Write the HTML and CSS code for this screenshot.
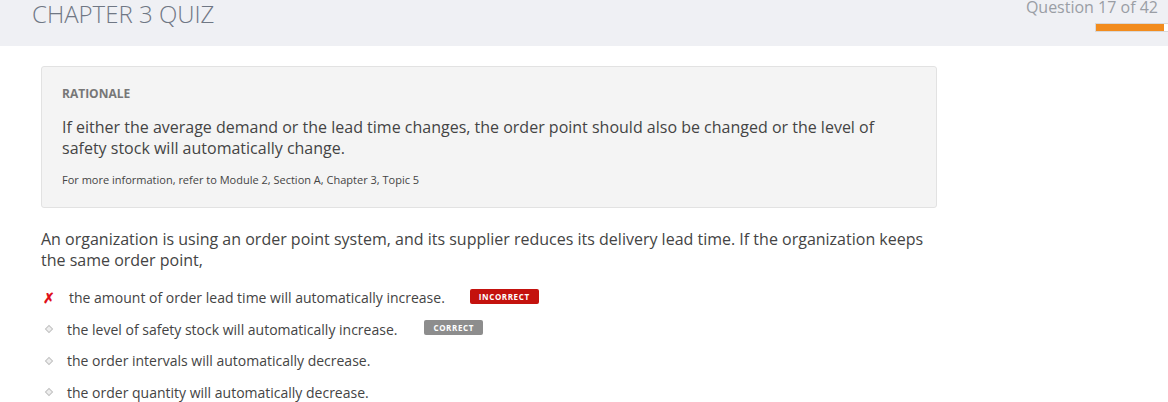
FILE: index.html
```html
<!DOCTYPE html>
<html>
<head>
<meta charset="utf-8">
<link rel="stylesheet" href="styles.css">
</head>
<body>
<header class="topbar">
  <h1 class="title">CHAPTER 3 QUIZ</h1>
  <div class="progress-wrap">
    <div class="counter">Question 17 of 42</div>
    <div class="progress"><div class="fill" style="width:95%"></div></div>
  </div>
</header>
<main class="content">
  <section class="rationale">
    <div class="r-label">RATIONALE</div>
    <p class="r-text">If either the average demand or the lead time changes, the order point should also be changed or the level of safety stock will automatically change.</p>
    <p class="r-ref">For more information, refer to Module 2, Section A, Chapter 3, Topic 5</p>
  </section>
  <p class="question">An organization is using an order point system, and its supplier reduces its delivery lead time. If the organization keeps the same order point,</p>
  <ul class="options">
    <li class="opt"><span class="mark x">✗</span><span class="opt-text">the amount of order lead time will automatically increase.</span><span class="badge bad">INCORRECT</span></li>
    <li class="opt"><span class="mark"><span class="dia"></span></span><span class="opt-text">the level of safety stock will automatically increase.</span><span class="badge good">CORRECT</span></li>
    <li class="opt"><span class="mark"><span class="dia"></span></span><span class="opt-text">the order intervals will automatically decrease.</span></li>
    <li class="opt"><span class="mark"><span class="dia"></span></span><span class="opt-text">the order quantity will automatically decrease.</span></li>
  </ul>
</main>
</body>
</html>
```
FILE: styles.css
```css
html, body { margin: 0; padding: 0; }
body { font-family: "Open Sans", "Liberation Sans", sans-serif; background: #fff; color: #444; width: 1168px; height: 402px; overflow: hidden; }
.topbar { background: #eff0f4; height: 46px; display: flex; justify-content: space-between; align-items: flex-start; }
.title { margin: 0 0 0 32px; font-weight: 300; font-size: 24px; line-height: 28px; color: #6f7784; letter-spacing: 0; }
.progress-wrap { display: flex; flex-direction: column; align-items: flex-end; }
.counter { font-size: 16px; line-height: 16px; color: #9a9ea5; margin-right: 10px; margin-top: -1px; }
.progress { width: 73px; height: 9px; margin-top: 8px; background: #fff; border: 1px solid #d8d8d8; border-right: none; box-sizing: border-box; }
.fill { height: 100%; background: #f28c1e; }
.content { padding: 20px 0 0 41px; width: 896px; }
.rationale { background: #f4f4f4; border: 1px solid #e2e2e2; border-radius: 3px; padding: 19px 20px 20px 20px; }
.r-label { font-size: 12px; font-weight: 700; color: #777; line-height: 16px; }
.r-text { margin: 15px 0 0; font-size: 16px; line-height: 21px; color: #444; }
.r-ref { margin: 14px 0 0; font-size: 11px; line-height: 14px; color: #444; }
.question { margin: 21px 0 0; font-size: 16px; line-height: 21px; color: #444; }
.options { list-style: none; margin: 11px 0 0; padding: 0; }
.opt { display: flex; align-items: center; height: 31.5px; font-size: 14px; color: #444; }
.mark { width: 26px; display: flex; align-items: center; justify-content: flex-start; }
.x { color: #e0101a; font-size: 14px; font-weight: 700; padding-left: 2px; }
.dia { width: 4px; height: 4px; border: 1px solid #c4c4c4; background: #eee; transform: rotate(45deg); margin-left: 5px; }
.badge { font-size: 8px; font-weight: 700; letter-spacing: 0.6px; color: #fff; border-radius: 2px; padding: 0 9px; height: 15px; line-height: 15px; margin-bottom: 3px; }
.bad { background: #c4120e; margin-left: 25px; }
.good { background: #8d8d8d; margin-left: 27px; }
```
